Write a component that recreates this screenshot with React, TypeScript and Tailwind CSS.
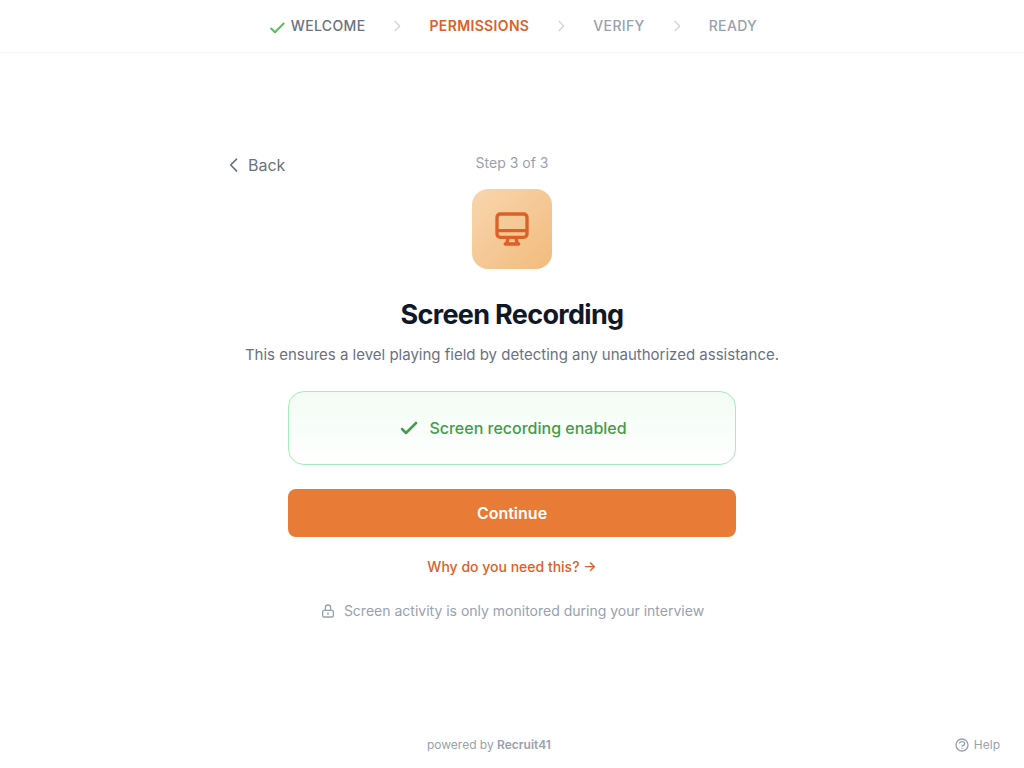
import { Fragment } from 'react'

interface IconProps {
  d: string
  className?: string
  strokeWidth?: number
}

function Icon({ d, className, strokeWidth = 2 }: IconProps) {
  return (
    <svg
      className={className}
      fill="none"
      viewBox="0 0 24 24"
      stroke="currentColor"
      strokeWidth={strokeWidth}
      strokeLinecap="round"
      strokeLinejoin="round"
      aria-hidden="true"
    >
      <path d={d} />
    </svg>
  )
}

const icons = {
  check: 'M5 13l4 4L19 7',
  stepCheck: 'M5 15l4.5 4.5L20 9',
  chevronRight: 'M9 5l7 7-7 7',
  chevronLeft: 'M15 19l-7-7 7-7',
  desktop:
    'M9.75 17L9 20l-1 1h8l-1-1-.75-3M3 13h18M5 17h14a2 2 0 002-2V5a2 2 0 00-2-2H5a2 2 0 00-2 2v10a2 2 0 002 2z',
  lock: 'M12 15v2m-6 4h12a2 2 0 002-2v-6a2 2 0 00-2-2H6a2 2 0 00-2 2v6a2 2 0 002 2zm10-10V7a4 4 0 00-8 0v4h8z',
  help: 'M8.228 9c.549-1.165 2.03-2 3.772-2 2.21 0 4 1.343 4 3 0 1.4-1.278 2.575-3.006 2.907-.542.104-.994.54-.994 1.093m0 3h.01M21 12a9 9 0 11-18 0 9 9 0 0118 0z',
}

type StepState = 'done' | 'current' | 'upcoming'

const steps: { label: string; state: StepState }[] = [
  { label: 'Welcome', state: 'done' },
  { label: 'Permissions', state: 'current' },
  { label: 'Verify', state: 'upcoming' },
  { label: 'Ready', state: 'upcoming' },
]

const stepStyles: Record<StepState, string> = {
  done: 'font-medium text-gray-500',
  current: 'font-semibold text-[#dc6027]',
  upcoming: 'font-medium text-gray-400',
}

function StepNav() {
  return (
    <header className="flex items-center justify-center gap-6 border-b border-gray-100 px-6 py-4">
      {steps.map((step, i) => (
        <Fragment key={step.label}>
          {i > 0 && (
            <Icon d={icons.chevronRight} strokeWidth={2} className="size-4 text-gray-300" />
          )}
          <div className={`flex items-center gap-1 text-sm uppercase tracking-wide ${stepStyles[step.state]}`}>
            {step.state === 'done' && (
              <Icon d={icons.stepCheck} strokeWidth={2.5} className="size-5 text-[#5bbf61]" />
            )}
            <span>{step.label}</span>
          </div>
        </Fragment>
      ))}
    </header>
  )
}

export default function App() {
  return (
    <div className="flex min-h-screen flex-col bg-white font-['Inter',sans-serif] text-gray-500 antialiased">
      <StepNav />

      <main className="flex flex-1 items-center justify-center px-6">
        <div className="flex w-full max-w-xl flex-col items-center">
          <div className="grid w-full grid-cols-3 items-start">
            <button className="flex items-center gap-1 justify-self-start text-base">
              <Icon d={icons.chevronLeft} className="size-5" />
              Back
            </button>
            <p className="text-center text-sm text-gray-400">Step 3 of 3</p>
          </div>

          <div className="mt-3 flex size-20 items-center justify-center rounded-2xl bg-linear-to-br from-[#f8d6ae] to-[#f2bb7d]">
            <Icon d={icons.desktop} className="size-10 text-[#dc6027]" />
          </div>

          <h1 className="mt-7 text-center text-[27px] leading-9 font-bold tracking-tight text-gray-900">
            Screen Recording
          </h1>
          <p className="mt-[10px] text-center text-[15px] leading-6">
            This ensures a level playing field by detecting any unauthorized assistance.
          </p>

          {/* Status + actions */}
          <div className="mt-6 flex w-full max-w-md flex-col items-center">
            <div className="flex w-full items-center justify-center gap-2 rounded-2xl border border-[#a5ecb8] bg-linear-to-b from-[#f2fcf4] to-white p-6 font-medium text-[#449c4a]">
              <Icon d={icons.check} strokeWidth={2.5} className="size-6" />
              <span>Screen recording enabled</span>
            </div>
            <button className="mt-6 h-12 w-full rounded-lg bg-[#e87b35] font-semibold text-white">
              Continue
            </button>
            <a href="#why" className="mt-5 text-sm font-medium text-[#dc6027]">
              Why do you need this? →
            </a>
            <p className="mt-6 flex items-center gap-2 text-sm text-gray-400">
              <Icon d={icons.lock} className="size-4" />
              Screen activity is only monitored during your interview
            </p>
          </div>
        </div>
      </main>

      <footer className="flex items-center justify-between px-6 pt-4 pb-[15px] text-xs text-gray-400">
        <div />
        <p>
          powered by <span className="font-semibold">Recruit41</span>
        </p>
        <button className="flex items-center gap-1">
          <Icon d={icons.help} className="size-4" />
          Help
        </button>
      </footer>
    </div>
  )
}
